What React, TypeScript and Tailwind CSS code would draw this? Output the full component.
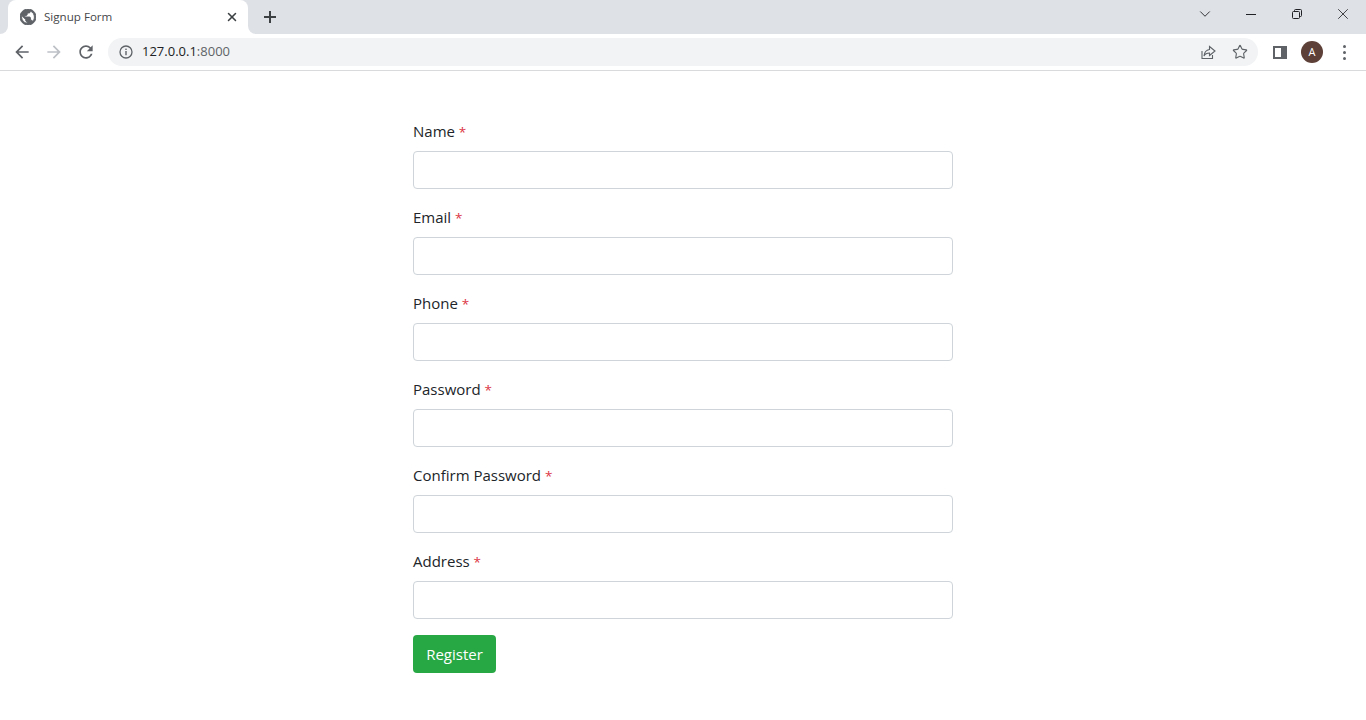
import React from 'react';
import { ChevronDown, Star, X } from 'lucide-react';

const FIELDS = ['Name', 'Email', 'Phone', 'Password', 'Confirm Password', 'Address'];

function TabStrip() {
  return (
    <div className="flex h-[34px] bg-[#dee1e6] pl-2">
      <div className="relative flex h-[34px] w-[240px] items-center rounded-t-lg bg-white pl-3 pr-[9px]">
        {/* flared bottom corners */}
        <div className="absolute bottom-0 left-[-8px] h-2 w-2 bg-white">
          <div className="h-2 w-2 rounded-br-lg bg-[#dee1e6]"></div>
        </div>
        <div className="absolute bottom-0 right-[-8px] h-2 w-2 bg-white">
          <div className="h-2 w-2 rounded-bl-lg bg-[#dee1e6]"></div>
        </div>
        <svg width="16" height="16" viewBox="2 2 20 20" fill="#5f6368" stroke="#5f6368" strokeWidth="1.2">
          <path d="M12 2C6.48 2 2 6.48 2 12s4.48 10 10 10 10-4.48 10-10S17.52 2 12 2zm-1 17.93c-3.95-.49-7-3.85-7-7.93 0-.62.08-1.21.21-1.79L9 15v1c0 1.1.9 2 2 2v1.93zm6.9-2.54c-.26-.81-1-1.39-1.9-1.39h-1v-3c0-.55-.45-1-1-1H8v-2h2c.55 0 1-.45 1-1V7h2c1.1 0 2-.9 2-2v-.41c2.93 1.19 5 4.06 5 7.41 0 2.08-.8 3.97-2.1 5.39z" />
        </svg>
        <span className="ml-2 text-[11.6px] text-[#45474a]">Signup Form</span>
        <X size={14} strokeWidth={2.6} className="ml-auto text-[#3c4043]" />
      </div>
      <div className="ml-[15px] flex h-[34px] w-[14px] items-center justify-center">
        <svg width="14" height="14" viewBox="0 0 14 14" fill="#3c4043" className="shrink-0">
          <rect x="6" y="1" width="2" height="12" />
          <rect x="1" y="6" width="12" height="2" />
        </svg>
      </div>
      <div className="ml-auto flex h-7">
        <div className="flex w-[46px] items-center justify-center">
          <ChevronDown size={18} strokeWidth={1.2} className="text-[#202124]" />
        </div>
        <div className="flex w-[46px] items-center justify-center">
          <div className="h-px w-[10px] bg-[#202124]"></div>
        </div>
        <div className="flex w-[46px] items-center justify-center">
          <svg width="12" height="12" viewBox="0 0 12 12" fill="none" stroke="#202124" strokeWidth="1">
            <rect x="1.5" y="3.5" width="7" height="7" rx="1" />
            <path d="M3.5 3.5V2.5a1 1 0 0 1 1-1h5a1 1 0 0 1 1 1v5a1 1 0 0 1-1 1h-1" />
          </svg>
        </div>
        <div className="flex w-[46px] items-center justify-center">
          <X size={18} strokeWidth={1.1} className="text-[#202124]" />
        </div>
      </div>
    </div>
  );
}

function Toolbar() {
  return (
    <div className="flex h-[37px] items-start border-b border-[#d9dadc] bg-white pl-1.5 pt-1">
      <div className="flex h-7 w-8 items-center justify-center">
        <svg width="20" height="20" viewBox="0 0 24 24" fill="#5f6368">
          <path d="M20 11H7.83l5.59-5.59L12 4l-8 8 8 8 1.41-1.41L7.83 13H20v-2z" />
        </svg>
      </div>
      <div className="flex h-7 w-8 items-center justify-center">
        <svg width="20" height="20" viewBox="0 0 24 24" fill="#bdc1c6">
          <path d="M4 11h12.17l-5.59-5.59L12 4l8 8-8 8-1.41-1.41L16.17 13H4v-2z" />
        </svg>
      </div>
      <div className="flex h-7 w-8 items-center justify-center">
        <svg width="20" height="20" viewBox="0 0 24 24" fill="#5f6368" className="-ml-px">
          <path d="M17.65 6.35C16.2 4.9 14.21 4 12 4c-4.42 0-7.99 3.58-7.99 8s3.57 8 7.99 8c3.73 0 6.84-2.55 7.73-6h-2.08c-.82 2.33-3.04 4-5.65 4-3.31 0-6-2.69-6-6s2.69-6 6-6c1.66 0 3.14.69 4.22 1.78L13 11h7V4l-2.35 2.35z" />
        </svg>
      </div>
      <div className="ml-1.5 flex h-7 w-[1150px] items-center rounded-full bg-[#f1f3f4] pl-[11px] pr-[10px]">
        <svg width="14" height="14" viewBox="0 0 14 14" fill="none">
          <circle cx="7" cy="7" r="6" stroke="#5f6368" strokeWidth="1.3" />
          <rect x="6.3" y="6" width="1.4" height="4.2" fill="#5f6368" />
          <rect x="6.3" y="3.6" width="1.4" height="1.4" fill="#5f6368" />
        </svg>
        <span className="ml-[9px] text-[13px] text-[#202124]">
          127.0.0.1<span className="text-[#5f6368]">:8000</span>
        </span>
        <svg width="18" height="18" viewBox="0 0 18 18" fill="none" stroke="#5f6368" strokeWidth="1.1" className="ml-auto">
          <path d="M3 8v7.5h10.5V12" />
          <path d="M10.5 3.5 16 8l-5.5 4.5V10c-2.6 0-4.4.8-5.5 3 .3-3.5 2.3-6 5.5-6.5z" />
        </svg>
        <Star size={16} strokeWidth={1.7} className="ml-[15px] text-[#5f6368]" />
      </div>
      <div className="ml-1.5 flex h-7 w-8 items-center justify-center">
        <div className="flex h-[13px] w-[14px] justify-start border-[2px] border-r-[6px] border-[#5f6368] bg-white"></div>
      </div>
      <div className="flex h-7 w-8 items-center justify-center">
        <div className="flex h-[22px] w-[22px] items-center justify-center rounded-full bg-[#5d4037] text-[11px] text-white">A</div>
      </div>
      <div className="flex h-7 w-8 flex-col items-center justify-center gap-[3px]">
        <div className="h-[3px] w-[3px] rounded-full bg-[#5f6368]"></div>
        <div className="h-[3px] w-[3px] rounded-full bg-[#5f6368]"></div>
        <div className="h-[3px] w-[3px] rounded-full bg-[#5f6368]"></div>
      </div>
    </div>
  );
}

export default function App() {
  return (
    <div className="h-[720px] overflow-hidden bg-white font-['Open_Sans','Noto_Sans',sans-serif]">
      <TabStrip />
      <Toolbar />
      <form className="mx-auto w-[540px] pt-12" onSubmit={(e) => e.preventDefault()}>
        {FIELDS.map((field) => (
          <div key={field} className="mb-4">
            <label className="mb-2 block h-6 text-[15px] leading-6 text-[#212529]">
              {field} <span className="text-[13.5px] text-[#dc3545]">*</span>
            </label>
            <input
              type="text"
              className="block h-[38px] w-full rounded border border-[#ced4da] bg-white px-3"
            />
          </div>
        ))}
        <button
          type="submit"
          className="h-[38px] w-[83px] rounded bg-[#28a745] text-[15px] text-white"
        >
          Register
        </button>
      </form>
    </div>
  );
}
